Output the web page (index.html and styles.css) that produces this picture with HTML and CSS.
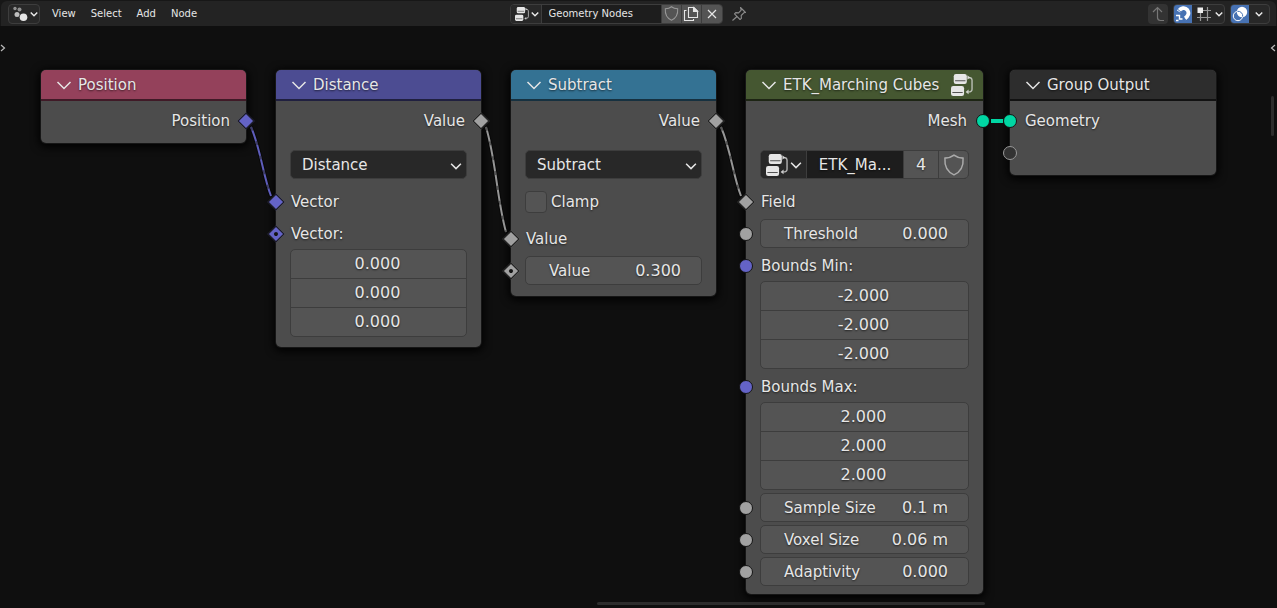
FILE: index.html
```
<!DOCTYPE html>
<html lang="en">
<head>
<meta charset="utf-8">
<title>Geometry Nodes</title>
<link rel="stylesheet" href="styles.css">
</head>
<body>
<svg class="defs" aria-hidden="true">
  <symbol id="chevron" viewBox="0 0 16 16"><path d="M1.500 5l6.500 6.500 6.500-6.500" fill="none" stroke="currentColor"/></symbol>
  <symbol id="tree" viewBox="0 0 16 16">
    <rect x="2" y="0" width="9.5" height="7.2" rx="1.6" fill="currentColor"/>
    <rect x="0" y="8.8" width="9.5" height="7.2" rx="1.6" fill="currentColor"/>
    <path d="M3 4.9h7.5M1 13.4h7.5" stroke="#222" stroke-opacity=".75" stroke-width=".8"/>
    <path d="M12.6 2.5q2.7 0 2.7 2v6.500q0 2-2.700 2" fill="none" stroke="currentColor" stroke-opacity=".75" stroke-width="1"/>
    <path d="M11.900 .9l1.900 1.600-1.900 1.600zM12.800 11.300l-2.200 1.700 2.200 1.700z" fill="currentColor" fill-opacity=".85"/>
  </symbol>
  <symbol id="shield" viewBox="0 0 16 16"><path d="M8 .8q2.500 2 6.600 2.200c.4 5.500-1.400 9.900-6.600 12.200C2.800 12.900 1 8.500 1.400 3 5.500 2.800 8 .8 8 .8z" fill="none" stroke="currentColor" stroke-width="1.100"/></symbol>
</svg>

<div class="editor">
  <header class="bar">
    <div class="group">
      <button class="combo type" aria-label="Editor type">
        <svg width="16" height="16" viewBox="0 0 16 16"><g fill="#e6e6e6"><circle cx="3" cy="2.500" r="1.700" opacity=".55"/><circle cx="7.500" cy="3.500" r="2" opacity=".55"/><circle cx="5" cy="8.500" r="2.500" opacity=".8"/><circle cx="11.500" cy="11.300" r="3.800"/></g></svg>
        <svg class="chev" width="8" height="8"><use href="#chevron"/></svg>
      </button>
      <nav class="menus">
        <button>View</button><button>Select</button><button>Add</button><button>Node</button>
      </nav>
    </div>

    <div class="group center">
      <div class="combo datablock">
        <button class="browse" aria-label="Browse node trees"><svg width="14" height="14"><use href="#tree"/></svg><svg class="chev" width="8" height="8"><use href="#chevron"/></svg></button>
        <input class="name" type="text" value="Geometry Nodes" aria-label="Node tree name">
        <button class="cell" aria-label="Fake user"><svg class="dim" width="15" height="15"><use href="#shield"/></svg></button>
        <button class="cell" aria-label="New"><svg width="16" height="16" viewBox="0 0 16 16" fill="none" stroke="currentColor" stroke-width="1.100"><path d="M5.500 1.500h5.500l3.500 3.500v6.500h-9zM3.500 4.500h-2v10h9v-1.500"/><path d="M10.500 1.500v4h4z" fill="currentColor"/></svg></button>
        <button class="cell" aria-label="Unlink"><svg width="10" height="10" viewBox="0 0 10 10"><path d="M1 1l8 8M9 1l-8 8" stroke="currentColor" stroke-width="1.200"/></svg></button>
      </div>
      <button class="pin" aria-label="Pin"><svg width="16" height="16" viewBox="0 0 16 16" fill="none" stroke="#8c8c8c" stroke-width="1.100" stroke-linejoin="round"><path d="M9.500 1.500l5 5-1.700.3-2.600 2.700.2 2.800-1.400 1.200-5.500-5.600 1.200-1.300 2.900.3 2.600-2.700zM6 10.500l-4.500 4"/></svg></button>
    </div>

    <div class="group right">
      <button class="parent" aria-label="Go to parent"><svg width="14" height="16" viewBox="0 0 14 16" fill="none" stroke="currentColor" stroke-width="1.200"><path d="M2 6l4.500-4.500L11 6M6.500 1.500v10q0 3 3 3H13"/></svg></button>
      <div class="combo">
        <button class="cell on" aria-label="Snap"><svg width="16" height="16" viewBox="0 0 16 16"><path d="M3.600 5.400C6 1.500 10 1 12.400 4c2.200 3 .6 6.500-2.600 8.600" fill="none" stroke="#fff" stroke-width="3.800"/><path d="M2.500 3.200l4 3.300M8 10l3 4.500" stroke="#4772b3" stroke-width="1"/><path d="M1 9.500h3.500v3.500h3M1 14.500h2.500" fill="none" stroke="#fff" stroke-width="1.400"/></svg></button>
        <button class="snap" aria-label="Snap to grid"><svg width="16" height="16" viewBox="0 0 16 16"><path d="M4.500 7v8M11.500 1v14M7 4.500h8M1 11.500h14" stroke="#969696" stroke-width="1.200"/><rect x="1.500" y="1.500" width="5.500" height="5.500" fill="#eee"/></svg><svg class="chev" width="8" height="8"><use href="#chevron"/></svg></button>
      </div>
      <div class="combo">
        <button class="cell on" aria-label="Overlays"><svg width="16" height="16" viewBox="0 0 16 16"><circle cx="10" cy="6" r="5.200" fill="#fff"/><circle cx="6" cy="10" r="4.700" fill="none" stroke="#fff"/><path d="M5.400 5.300a4.700 4.700 0 0 1 5.300 5.300" fill="none" stroke="#4772b3" stroke-width="1"/></svg></button>
        <button class="cell" aria-label="Overlay options"><svg class="chev" width="8" height="8"><use href="#chevron"/></svg></button>
      </div>
    </div>
  </header>

  <main class="canvas">
    <button class="edge edge-left" aria-label="Show toolbar"><svg width="6" height="8" viewBox="0 0 6 8"><path d="M1 1l3.500 3L1 7" fill="none" stroke="currentColor" stroke-width="1.200"/></svg></button>
    <button class="edge edge-right" aria-label="Show sidebar"><svg width="6" height="8" viewBox="0 0 6 8"><path d="M5 1L1.500 4 5 7" fill="none" stroke="currentColor" stroke-width="1.200"/></svg></button>

    <section class="node position">
      <h2><svg width="16" height="16"><use href="#chevron"/></svg>Position</h2>
      <div class="body"><div class="row out">Position<i class="socket diamond vector"></i></div></div>
    </section>

    <section class="node distance">
      <h2><svg width="16" height="16"><use href="#chevron"/></svg>Distance</h2>
      <div class="body">
        <div class="row out">Value<i class="socket diamond"></i></div>
        <div class="row pick"><select aria-label="Operation"><option>Distance</option></select><svg width="12" height="12"><use href="#chevron"/></svg></div>
        <div class="row">Vector<i class="socket diamond vector"></i></div>
        <fieldset class="vec"><legend class="row">Vector:<i class="socket diamond vector dot"></i></legend>
          <div class="stack"><input value="0.000" aria-label="X"><input value="0.000" aria-label="Y"><input value="0.000" aria-label="Z"></div>
        </fieldset>
      </div>
    </section>

    <section class="node subtract">
      <h2><svg width="16" height="16"><use href="#chevron"/></svg>Subtract</h2>
      <div class="body">
        <div class="row out">Value<i class="socket diamond"></i></div>
        <div class="row pick"><select aria-label="Operation"><option>Subtract</option></select><svg width="12" height="12"><use href="#chevron"/></svg></div>
        <label class="row check"><input type="checkbox">Clamp</label>
        <div class="row">Value<i class="socket diamond"></i></div>
        <div class="row field"><label for="sub">Value</label><input id="sub" value="0.300"><i class="socket diamond dot"></i></div>
      </div>
    </section>

    <section class="node cubes">
      <h2><svg width="16" height="16"><use href="#chevron"/></svg>ETK_Marching Cubes<svg class="badge" width="22" height="22"><use href="#tree"/></svg></h2>
      <div class="body">
        <div class="row out">Mesh<i class="socket geometry"></i></div>
        <div class="row pick block">
          <button class="browse" aria-label="Browse groups"><svg width="22" height="22"><use href="#tree"/></svg><svg width="12" height="12"><use href="#chevron"/></svg></button>
          <button class="name">ETK_Ma...</button>
          <button class="users">4</button>
          <button class="fake" aria-label="Fake user"><svg width="22" height="22"><use href="#shield"/></svg></button>
        </div>
        <div class="row">Field<i class="socket diamond"></i></div>
        <div class="row field"><label for="thr">Threshold</label><input id="thr" value="0.000"><i class="socket"></i></div>
        <fieldset class="vec"><legend class="row">Bounds Min:<i class="socket vector"></i></legend>
          <div class="stack"><input value="-2.000" aria-label="Min X"><input value="-2.000" aria-label="Min Y"><input value="-2.000" aria-label="Min Z"></div>
        </fieldset>
        <fieldset class="vec"><legend class="row">Bounds Max:<i class="socket vector"></i></legend>
          <div class="stack"><input value="2.000" aria-label="Max X"><input value="2.000" aria-label="Max Y"><input value="2.000" aria-label="Max Z"></div>
        </fieldset>
        <div class="row field"><label for="smp">Sample Size</label><input id="smp" value="0.1 m"><i class="socket"></i></div>
        <div class="row field"><label for="vox">Voxel Size</label><input id="vox" value="0.06 m"><i class="socket"></i></div>
        <div class="row field"><label for="ada">Adaptivity</label><input id="ada" value="0.000"><i class="socket"></i></div>
      </div>
    </section>

    <section class="node output">
      <h2><svg width="16" height="16"><use href="#chevron"/></svg>Group Output</h2>
      <div class="body">
        <div class="row">Geometry<i class="socket geometry"></i></div>
        <div class="row"><i class="socket empty"></i></div>
      </div>
    </section>

    <svg class="links" width="1216" height="580" viewBox="0 26 1216 580" fill="none" aria-hidden="true">
      <g stroke="#080808" stroke-width="4"><path d="M251 127C261 150 263 176 271 196M486 127C496 160 497 200 506 232M721 127C731 150 733 176 741 196"/></g>
      <path d="M251 127C261 150 263 176 271 196" stroke="#5e5dbb" stroke-width="2"/>
      <path d="M486 127C496 160 497 200 506 232M721 127C731 150 733 176 741 196" stroke="#969696" stroke-width="2"/>
      <path d="M251 127C261 150 263 176 271 196M486 127C496 160 497 200 506 232M721 127C731 150 733 176 741 196" stroke="#222" stroke-opacity=".55" stroke-width="2" stroke-dasharray="4 11"/>
      <path d="M991 121h12" stroke="#00d6a3" stroke-width="4"/>
    </svg>

    <i class="scroll vertical"></i>
    <i class="scroll horizontal"></i>
  </main>
</div>
</body>
</html>
```
FILE: styles.css
```
* { box-sizing: border-box; }
body {
  margin: 0;
  background: #171717;
  color: #e6e6e6;
  font-family: "DejaVu Sans", sans-serif;
}
button, input, select {
  margin: 0;
  padding: 0;
  border: 0;
  background: none;
  color: inherit;
  font: inherit;
  min-width: 0;
}
svg { display: block; flex: none; }
.defs { position: absolute; width: 0; height: 0; }

.editor {
  height: 100vh;
  padding: 1px 1px 0;
  display: flex;
  flex-direction: column;
}

/* Header bar */
.bar {
  flex: none;
  height: 25px;
  padding: 0 6px 0 7px;
  display: grid;
  grid-template-columns: 1fr auto 1fr;
  align-items: center;
  background: #232323;
  border-radius: 6px 6px 0 0;
  font-size: 10px;
}
.group { display: flex; align-items: center; }
.center { padding-right: 22px; gap: 8px; }
.right { justify-content: flex-end; gap: 5px; }
.combo {
  display: flex;
  align-items: center;
  height: 20px;
  border: 1px solid #3d3d3d;
  border-radius: 4px;
  background: #282828;
  overflow: hidden;
}
.chev { stroke-width: 3px; }
.type { width: 32px; padding-left: 3px; gap: 2px; }
.menus { display: flex; gap: 15px; margin-left: 12px; }
.datablock { background: #1d1d1d; }
.datablock button, .datablock input { height: 18px; border-right: 1px solid #3d3d3d; }
.datablock button:last-child { border-right: 0; }
.browse { display: flex; align-items: center; background: #282828; }
.datablock .browse { width: 31px; padding-left: 4px; gap: 2px; }
.datablock .name { width: 120px; padding-left: 7px; }
.cell {
  width: 20px;
  height: 18px;
  display: flex;
  align-items: center;
  justify-content: center;
}
.datablock .cell { background: #545454; }
.dim { color: #999; }
.on { width: 18px; background: #4772b3; }
.snap { width: 32px; display: flex; align-items: center; gap: 3px; padding-left: 4px; }
.parent {
  width: 20px;
  height: 20px;
  display: flex;
  align-items: center;
  justify-content: center;
  border-radius: 4px;
  background: #333;
  color: #777;
}

/* Node canvas */
.canvas {
  position: relative;
  flex: 1;
  margin: 0 -1px;
  background: #0f0f0f;
  overflow: hidden;
  font-size: 15px;
}
.edge { position: absolute; top: 18px; color: #bbb; }
.edge-left { left: 0; }
.edge-right { right: 1px; }
.links { position: absolute; left: 0; top: 0; pointer-events: none; }

.node {
  position: absolute;
  top: 44px;
  width: 205px;
  border-radius: 5px;
  background: #4c4c4c;
  box-shadow: 0 0 0 1px #161616, 0 2px 8px 2px #000;
  text-shadow: 0 1px 2px #0009;
  stroke-width: 2px;
}
.position { left: 41px; --head: #94415b; --line: #401a27; }
.distance { left: 276px; --head: #4c4c92; --line: #202040; }
.subtract { left: 511px; --head: #347293; --line: #163140; }
.cubes { left: 746px; width: 237px; --head: #455731; --line: #1d2514; }
.output { left: 1010px; width: 206px; --head: #2d2d2d; --line: #121212; }

.node h2 {
  margin: 0;
  height: 31px;
  padding: 0 10px 0 15px;
  display: flex;
  align-items: center;
  gap: 6px;
  border-bottom: 2px solid var(--line);
  border-radius: 5px 5px 0 0;
  background: var(--head);
  font-size: 15px;
  font-weight: 400;
  white-space: nowrap;
  stroke-width: 1.5px;
}
.badge { margin-left: auto; }

.body {
  padding: 5px 14px 8px;
  display: flex;
  flex-direction: column;
  gap: 3px;
}
.distance .body { padding-bottom: 10px; }
.subtract .body { padding-bottom: 11px; }
.row {
  position: relative;
  width: 100%;
  height: 29px;
  padding: 0 1px;
  display: flex;
  align-items: center;
  white-space: nowrap;
}
.out { justify-content: flex-end; padding-right: 2px; }
.pick {
  margin: 12px 0 5px;
  padding: 0;
  border: 1px solid #3d3d3d;
  border-radius: 5px;
  background: #282828;
}
.pick select {
  appearance: none;
  width: 100%;
  height: 100%;
  padding-left: 11px;
}
.pick > svg { margin: 3px 4px 0 -16px; pointer-events: none; }
.check { gap: 4px; padding: 0; margin-bottom: 5px; }
.check input {
  appearance: none;
  width: 22px;
  height: 22px;
  border: 1px solid #3d3d3d;
  border-radius: 4px;
  background: #545454;
}

.field {
  border: 1px solid #3d3d3d;
  border-radius: 5px;
  background: #545454;
  padding: 0 20px 0 23px;
  justify-content: space-between;
}
.field input { width: 64px; text-align: right; }
.field input, .stack input { font-size: 16px; text-shadow: inherit; }

.vec { margin: 0; padding: 0; border: 0; min-width: 0; }
.stack {
  margin-top: 1px;
  display: flex;
  flex-direction: column;
  border: 1px solid #3d3d3d;
  border-radius: 5px;
  background: #545454;
  overflow: hidden;
}
.stack input { height: 29px; text-align: center; padding: 0 2px 1px 0; }
.stack input + input { border-top: 1px solid #3d3d3d; }
.stack input:first-child { height: 28px; }

.block { overflow: hidden; }
.block button {
  height: 27px;
  border-right: 1px solid #3d3d3d;
  text-shadow: inherit;
}
.block .browse { width: 46px; padding-left: 5px; gap: 2px; }
.block .name { flex: 1; background: #1d1d1d; }
.block .users { width: 35px; background: #545454; font-size: 16px; }
.block .fake {
  width: 29px;
  display: flex;
  align-items: center;
  justify-content: center;
  border-right: 0;
  background: #545454;
  color: #aaa;
}

/* Sockets sit across the node's edge */
.socket {
  position: absolute;
  left: -21px;
  top: 50%;
  width: 14px;
  height: 14px;
  margin-top: -7px;
  border: 1px solid #141414;
  border-radius: 50%;
  background: #a1a1a1;
}
.field .socket { left: -22px; }
.out .socket { left: auto; right: -21px; }
.socket.diamond { width: 12px; height: 12px; margin: -6px 1px 0; border-radius: 0; transform: rotate(45deg); }
.socket.vector { background: #6463c7; }
.socket.geometry { background: #00d6a3; }
.socket.empty { background: #333; border-color: #999; }
.dot::after {
  content: "";
  position: absolute;
  left: 3px;
  top: 3px;
  width: 4px;
  height: 4px;
  border-radius: 50%;
  background: #141414;
}

.scroll { position: absolute; border-radius: 2px; background: #2d2d2d; }
.vertical { right: 3px; top: 70px; width: 3px; height: 40px; }
.horizontal { left: 597px; right: 292px; bottom: 3px; height: 3px; }
```
